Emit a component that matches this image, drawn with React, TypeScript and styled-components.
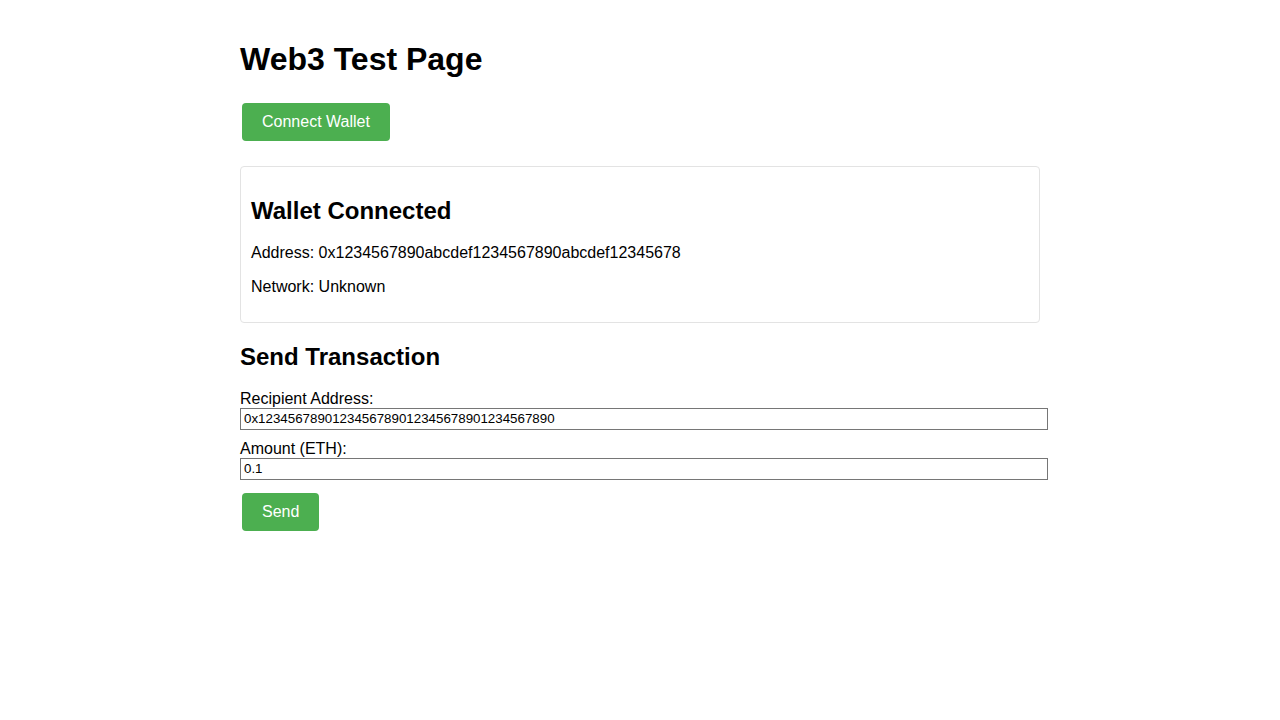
import { FC } from 'react';
import styled, { createGlobalStyle } from 'styled-components';

const GlobalStyle = createGlobalStyle`
  body {
    margin: 0;
    background: #fff;
    color: #000;
    font-family: 'Liberation Sans', Arial, sans-serif;
  }
`;

const Page = styled.div`
  max-width: 800px;
  margin: 0 auto;
  padding: 20px;
`;

const Title = styled.h1`
  font-size: 32px;
  font-weight: bold;
  margin: 21.44px 0;
`;

const Button = styled.button`
  display: inline-block;
  margin: 3px 2px 5px;
  padding: 10px 20px;
  border: none;
  border-radius: 4px;
  background: #4caf50;
  color: #fff;
  font-family: 'Liberation Sans', Arial, sans-serif;
  font-size: 16px;
  line-height: 18px;
  cursor: pointer;
`;

const Card = styled.div`
  margin: 20px 0;
  padding: 10px;
  border: 1px solid #e3e3e3;
  border-radius: 4px;
`;

const Heading = styled.h2`
  font-size: 24px;
  font-weight: bold;
  line-height: 27px;
  margin: 19.92px 0;
`;

const Info = styled.p`
  font-size: 16px;
  line-height: 18px;
  margin: 16px 0;
`;

const Label = styled.label`
  display: block;
  font-size: 16px;
  line-height: 18px;
`;

const Input = styled.input`
  display: block;
  width: 100%;
  margin: 0 0 10px;
  padding: 2px 3px;
  border: 1px solid #767676;
  font-family: 'Liberation Sans', Arial, sans-serif;
  font-size: 13.33px;
  line-height: 16px;
  color: #000;
  background: #fff;
  outline: none;
`;

const Field: FC<{ label: string; value: string }> = ({ label, value }) => (
  <>
    <Label>{label}</Label>
    <Input type="text" defaultValue={value} />
  </>
);

export default function App() {
  return (
    <Page>
      <GlobalStyle />
      <Title>Web3 Test Page</Title>
      <div>
        <Button>Connect Wallet</Button>
      </div>
      <Card>
        <Heading>Wallet Connected</Heading>
        <Info>Address: 0x1234567890abcdef1234567890abcdef12345678</Info>
        <Info>Network: Unknown</Info>
      </Card>
      <Heading>Send Transaction</Heading>
      <Field label="Recipient Address:" value="0x1234567890123456789012345678901234567890" />
      <Field label="Amount (ETH):" value="0.1" />
      <Button>Send</Button>
    </Page>
  );
}
